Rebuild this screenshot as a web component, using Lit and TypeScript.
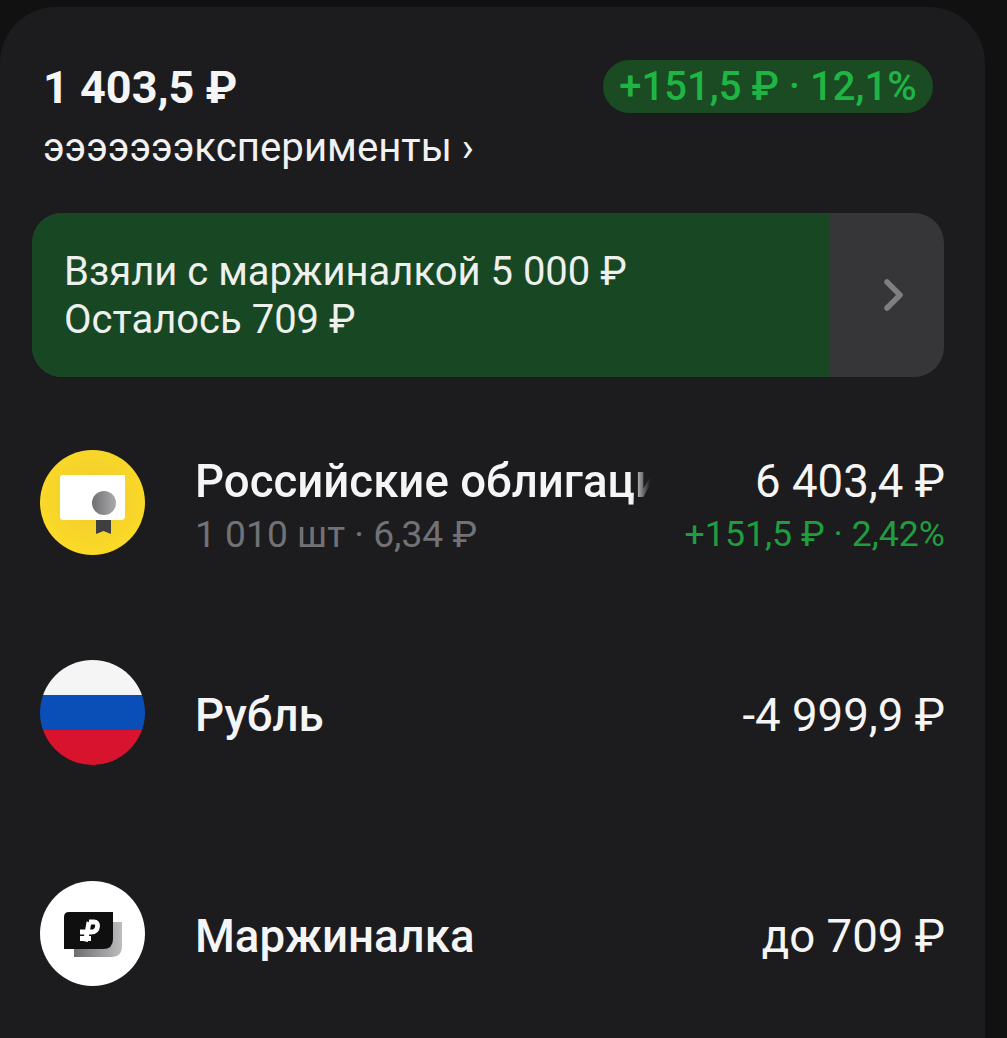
import { LitElement, html, css } from "lit";
import { customElement } from "lit/decorators.js";

@customElement("app-root")
export class AppRoot extends LitElement {
  static styles = css`
    :host { display: block; width: 1007px; height: 1038px; background: #111112; overflow: hidden;
      font-family: Roboto, "Liberation Sans", sans-serif; color: #f5f5f6; }
    .card { box-sizing: border-box; width: 985px; height: 1031px; margin-top: 7px; background: #1c1c1e;
      border-radius: 56px 56px 0 0; padding: 53px 41px 0 32px; display: flex; flex-direction: column; }
    .head { display: flex; justify-content: space-between; align-items: flex-start; padding-left: 11px; }
    .total { font-size: 45px; line-height: 56px; font-weight: 700; }
    .sub { font-size: 40.2px; line-height: 48px; margin-top: 8px; color: #f1f1f2; white-space: nowrap; }
    .pill { display: flex; align-items: center; justify-content: center; width: 330px; height: 53px; box-sizing: border-box; margin-right: 11px;
      border-radius: 27px; background: #1a4b23; color: #1fb544; font-size: 40px; font-weight: 500; white-space: nowrap; }
    .banner { display: flex; height: 164px; margin-top: 41px; width: 912px; border-radius: 30px; overflow: hidden; background: #363638; }
    .banner-text { flex: 0 0 797px; box-sizing: border-box; background: #174823; padding: 35px 0 0 32px;
      font-size: 40px; line-height: 48px; color: #eef0ee; white-space: nowrap; }
    .banner-arrow { flex: 1; display: flex; align-items: center; justify-content: center; padding-left: 14px; }
    .row { display: flex; align-items: center; height: 105px; padding-left: 8px; width: 905px; }
    .r1 { margin-top: 73px; }
    .r2 { margin-top: 105px; }
    .r3 { margin-top: 116px; }
    .ic { flex: 0 0 105px; height: 105px; }
    .ic svg { display: block; }
    .left { width: 455px; margin-left: 50px; padding-top: 7px; }
    .name { font-size: 45.6px; line-height: 56px; font-weight: 500; white-space: nowrap; overflow: hidden; }
    .fade { -webkit-mask-image: linear-gradient(90deg, #000 96%, transparent 100%); mask-image: linear-gradient(90deg, #000 96%, transparent 100%); }
    .meta { font-size: 37.2px; line-height: 48px; color: #727276; white-space: nowrap; }
    .right { margin-left: auto; text-align: right; white-space: nowrap; padding-top: 7px; }
    .val { font-size: 45.6px; line-height: 56px; }
    .gain { font-size: 35.7px; line-height: 48px; color: #1f9e3f; }
  `;

  render() {
    return html`<div class="card">
      <div class="head">
        <div>
          <div class="total">1 403,5 ₽</div>
          <div class="sub">эээээээксперименты ›</div>
        </div>
        <div class="pill">+151,5 ₽ · 12,1%</div>
      </div>
      <div class="banner">
        <div class="banner-text">Взяли с маржиналкой 5 000 ₽<br />Осталось 709 ₽</div>
        <div class="banner-arrow">
          <svg width="19" height="32" viewBox="0 0 19 32" fill="none">
            <path d="M3 3 L16 16 L3 29" stroke="#7f7f82" stroke-width="5.5" stroke-linecap="round" stroke-linejoin="round" />
          </svg>
        </div>
      </div>
      <div class="row r1">
        <div class="ic">
          <svg width="105" height="105" viewBox="0 0 105 105">
            <defs>
              <linearGradient id="seal" x1="0" y1="0" x2="1" y2="0"><stop offset="0" stop-color="#707072" /><stop offset="1" stop-color="#ababad" /></linearGradient>
              <radialGradient id="sun" cx="0.5" cy="0.45" r="0.6"><stop offset="0" stop-color="#f0c92f" /><stop offset="1" stop-color="#fcdc26" /></radialGradient>
            </defs>
            <circle cx="52.5" cy="52.5" r="52.5" fill="url(#sun)" />
            <path d="M56 65 H71 V84 L63.5 81 L56 84 Z" fill="#3f3f40" />
            <path d="M23 25 H85 V66 Q85 70 81 70 H23 Q20 70 20 67 V28 Q20 25 23 25 Z" fill="#ffffff" />
            <circle cx="64" cy="53" r="12" fill="url(#seal)" />
          </svg>
        </div>
        <div class="left">
          <div class="name fade">Российские облигации</div>
          <div class="meta">1 010 шт · 6,34 ₽</div>
        </div>
        <div class="right">
          <div class="val">6 403,4 ₽</div>
          <div class="gain">+151,5 ₽ · 2,42%</div>
        </div>
      </div>
      <div class="row r2">
        <div class="ic">
          <svg width="105" height="105" viewBox="0 0 105 105">
            <defs><clipPath id="flag"><circle cx="52.5" cy="52.5" r="52.5" /></clipPath></defs>
            <g clip-path="url(#flag)">
              <rect width="105" height="35" fill="#f5f5f5" />
              <rect y="35" width="105" height="35" fill="#0a4fb8" />
              <rect y="70" width="105" height="35" fill="#d7132d" />
            </g>
          </svg>
        </div>
        <div class="left"><div class="name">Рубль</div></div>
        <div class="right"><div class="val">-4 999,9 ₽</div></div>
      </div>
      <div class="row r3">
        <div class="ic">
          <svg width="105" height="105" viewBox="0 0 105 105">
            <defs>
              <linearGradient id="back" x1="0" y1="0" x2="1" y2="0"><stop offset="0" stop-color="#6d6d6f" /><stop offset="1" stop-color="#bdbdbf" /></linearGradient>
            </defs>
            <circle cx="52.5" cy="52.5" r="52.5" fill="#ffffff" />
            <path d="M34 41 H82 V65 Q82 76 71 76 H34 Z" fill="url(#back)" />
            <path d="M29 31 H73 V58 Q73 68 63 68 H24 V36 Q24 31 29 31 Z" fill="#0f0f10" />
            <path d="M49 41 H54 Q58 41 57.5 45.5 Q57 51 51 51 H40 M40 57.5 H51 M49 41 L45.5 60.5" fill="none" stroke="#ffffff" stroke-width="4.8" stroke-linecap="butt" stroke-linejoin="round" />
          </svg>
        </div>
        <div class="left"><div class="name">Маржиналка</div></div>
        <div class="right"><div class="val">до 709 ₽</div></div>
      </div>
    </div>`;
  }
}
